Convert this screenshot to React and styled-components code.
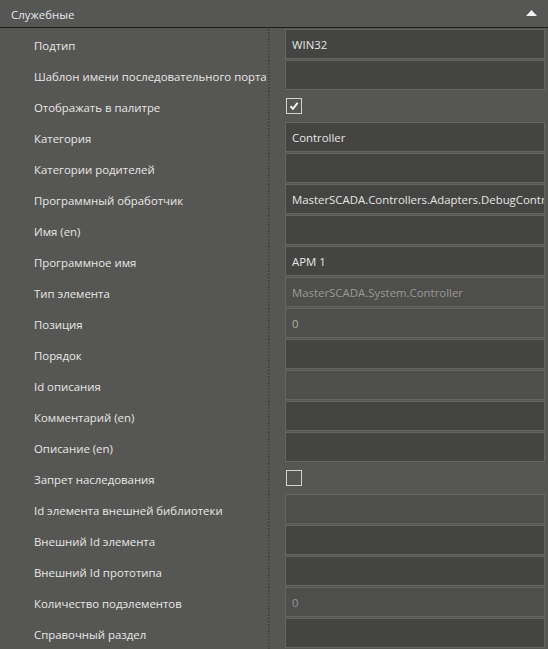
import React from "react";
import styled, { createGlobalStyle } from "styled-components";

const GlobalStyle = createGlobalStyle`
  html, body {
    margin: 0;
    padding: 0;
    background: #565654;
  }
  body {
    font-family: "Open Sans", "Noto Sans", sans-serif;
    font-size: 11.4px;
  }
`;

const rows = [
  { label: "Подтип", value: "WIN32" },
  { label: "Шаблон имени последовательного порта", value: "" },
  { label: "Отображать в палитре", check: true },
  { label: "Категория", value: "Controller" },
  { label: "Категории родителей", value: "" },
  { label: "Программный обработчик", value: "MasterSCADA.Controllers.Adapters.DebugController" },
  { label: "Имя (en)", value: "" },
  { label: "Программное имя", value: "АРМ 1" },
  { label: "Тип элемента", value: "MasterSCADA.System.Controller", readOnly: true, tone: "muted" },
  { label: "Позиция", value: "0", readOnly: true, tone: "warm" },
  { label: "Порядок", value: "" },
  { label: "Id описания", value: "", readOnly: true },
  { label: "Комментарий (en)", value: "" },
  { label: "Описание (en)", value: "" },
  { label: "Запрет наследования", check: false },
  { label: "Id элемента внешней библиотеки", value: "", readOnly: true },
  { label: "Внешний Id элемента", value: "" },
  { label: "Внешний Id прототипа", value: "" },
  { label: "Количество подэлементов", value: "0", readOnly: true, tone: "cool" },
  { label: "Справочный раздел", value: "" },
];

const toneColors = {
  normal: "#e6e6e4",
  muted: "#9a9a98",
  warm: "#b4b0a0",
  cool: "#8c98a2",
};

export default function App() {
  return (
    <Panel>
      <GlobalStyle />
      <Header>
        <span>Служебные</span>
        <Collapse viewBox="0 0 11 6" aria-hidden="true">
          <path d="M5.5 0 L11 6 L0 6 Z" fill="#f2f2f2" />
        </Collapse>
      </Header>
      <Grid>
        {rows.map((row) => (
          <Row key={row.label}>
            <Label>{row.label}</Label>
            <Splitter />
            <Cell>
              {"check" in row ? (
                <CheckBox>
                  {row.check && (
                    <svg viewBox="0 0 12 12" width="12" height="12">
                      <path
                        d="M2.5 6.2 L5 8.8 L9.6 2.8"
                        fill="none"
                        stroke="#f4f4f4"
                        strokeWidth="2"
                      />
                    </svg>
                  )}
                </CheckBox>
              ) : (
                <Field $readOnly={row.readOnly} $tone={row.tone || "normal"}>
                  {row.value}
                </Field>
              )}
            </Cell>
          </Row>
        ))}
      </Grid>
    </Panel>
  );
}

const Panel = styled.div`
  width: 548px;
  height: 649px;
  overflow: hidden;
  background: #565654;
`;

const Header = styled.div`
  height: 28px;
  box-sizing: border-box;
  display: flex;
  align-items: center;
  justify-content: space-between;
  padding: 0 11px;
  border-bottom: 1px solid #1c1c1b;
  color: #e4eaf0;
  span {
    padding-top: 1px;
  }
`;

const Collapse = styled.svg`
  width: 11px;
  height: 6px;
  margin-top: -1px;
`;

const Grid = styled.div`
  display: flex;
  flex-direction: column;
  padding-top: 1px;
`;

const Row = styled.div`
  display: flex;
  height: 31px;
`;

const Label = styled.div`
  width: 234px;
  padding: 1px 0 0 34px;
  display: flex;
  align-items: center;
  color: #e8e8e6;
  white-space: nowrap;
`;

const Splitter = styled.div`
  width: 2px;
  margin-right: 15px;
  background: repeating-linear-gradient(
    to bottom,
    #444442 0px,
    #444442 2px,
    #5e5e5c 2px,
    #5e5e5c 3px
  );
`;

const Cell = styled.div`
  flex: none;
  width: 260px;
  height: 30px;
  display: flex;
  align-items: center;
`;

const Field = styled.div`
  box-sizing: border-box;
  width: 100%;
  height: 30px;
  border: 1px solid #646462;
  background: ${(p) => (p.$readOnly ? "#4e4e4c" : "#444442")};
  color: ${(p) => toneColors[p.$tone]};
  padding: 1px 0 0 6px;
  display: flex;
  align-items: center;
  white-space: nowrap;
  overflow: hidden;
`;

const CheckBox = styled.div`
  box-sizing: border-box;
  width: 16px;
  height: 16px;
  margin-left: 1px;
  border: 1px solid #d2d2d0;
  display: flex;
  align-items: center;
  justify-content: center;
`;
